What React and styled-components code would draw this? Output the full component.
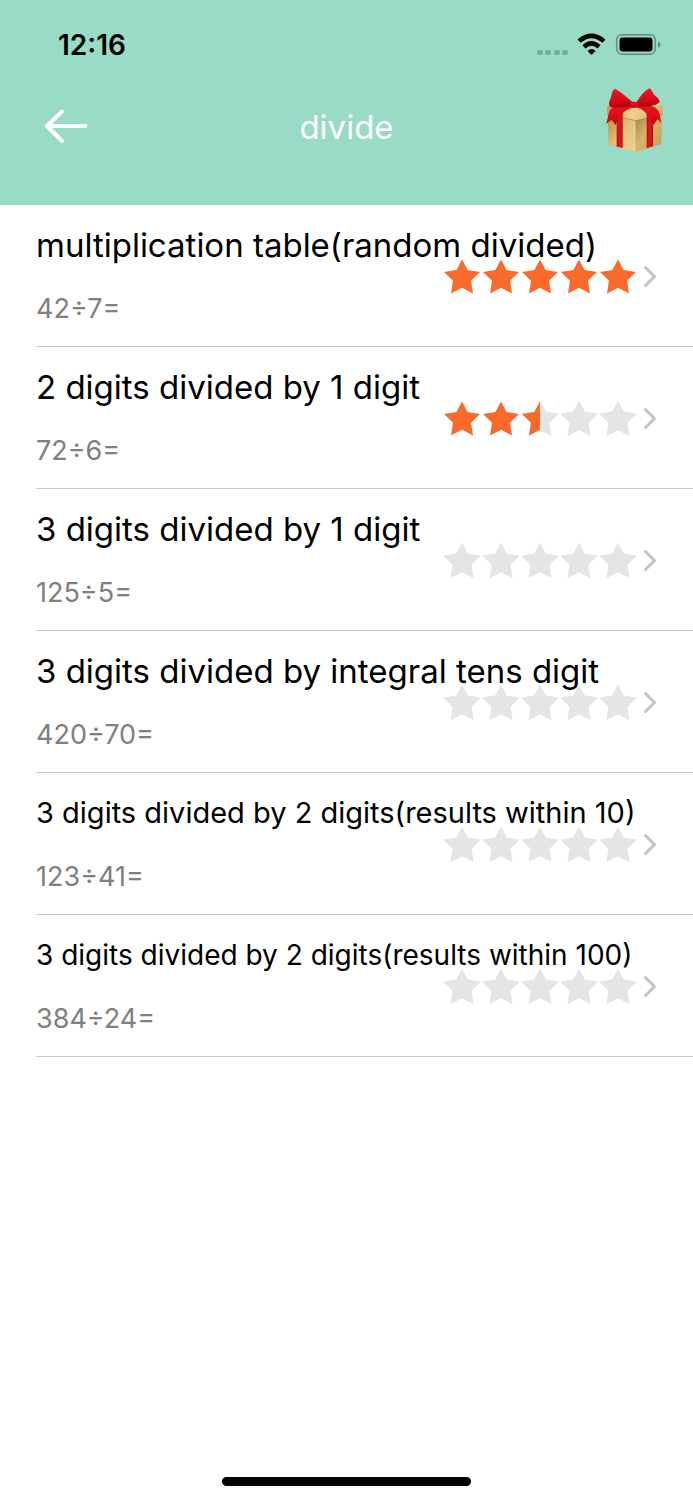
import React from 'react';
import styled, { createGlobalStyle } from 'styled-components';

const GlobalStyle = createGlobalStyle`
    * {
        box-sizing: border-box;
    }

    body {
        margin: 0;
        background: #fff;
        color: #000;
        font-family: Inter, 'Liberation Sans', sans-serif;
    }
`;

const Screen = styled.div`
    display: flex;
    flex-direction: column;
    min-height: 100vh;
`;

const Header = styled.header`
    display: flex;
    flex-direction: column;
    height: 205px;
    background: #99dbc6;
`;

const StatusBar = styled.div`
    display: flex;
    align-items: center;
    justify-content: space-between;
    height: 88px;
    padding: 2px 32px 0 58px;
`;

const Time = styled.time`
    font-size: 28px;
    font-weight: 600;
    line-height: 32px;
`;

const StatusIcons = styled.svg`
    display: block;
    width: 124px;
    height: 24px;
`;

const NavBar = styled.nav`
    display: grid;
    grid-template-columns: 1fr auto 1fr;
    align-items: center;
    height: 76px;
    padding: 0 28px 0 42px;
`;

const IconButton = styled.button`
    display: block;
    align-self: ${(props) => props.$valign || 'center'};
    justify-self: ${(props) => props.$align};
    padding: 0;
    border: 0;
    background: none;
    cursor: pointer;

    svg {
        display: block;
    }
`;

const Heading = styled.h1`
    margin: 0;
    padding: 2px 14px 0 0;
    color: #fff;
    font-size: 33px;
    font-weight: 400;
    line-height: 40px;
`;

const LevelList = styled.ul`
    flex: 1;
    margin: 0;
    padding: 0 0 0 36px;
    list-style: none;
`;

const LevelItem = styled.li`
    height: 142px;
    border-bottom: 1px solid #c8c8c9;
`;

const LevelLink = styled.a`
    display: grid;
    align-items: center;
    height: 100%;
    padding: 2px 36px 0 0;
    color: inherit;
    text-decoration: none;
`;

/* text and rating share one cell, so long titles run above the stars */
const LevelText = styled.div`
    display: flex;
    grid-area: 1 / 1;
    flex-direction: column;
    gap: 24px;
`;

const titleSizes = {
    regular: '33px',
    compact: '29px',
    small: '28px',
};

const LevelTitle = styled.span`
    font-size: ${(props) => titleSizes[props.$size]};
    line-height: 40px;
    white-space: nowrap;
`;

const Sample = styled.span`
    color: #808080;
    font-size: 27px;
    line-height: 40px;
`;

const Rating = styled.div`
    display: flex;
    grid-area: 1 / 1;
    align-items: center;
    justify-self: end;
    gap: 7px;

    svg {
        display: block;
    }
`;

const HomeArea = styled.footer`
    display: flex;
    justify-content: center;
    padding-bottom: 14px;
`;

const HomeIndicator = styled.div`
    width: 36%;
    height: 9px;
    border-radius: 5px;
    background: #000;
`;

const STAR_PATH =
    'M18 0.4 L23.6 11 L36 13 L27 21.8 L29 34.4 L18 28.8 L7 34.4 L9 21.8 L0 13 L12.4 11 Z';

const levels = [
    { title: 'multiplication table(random divided)', sample: '42÷7=', stars: 5 },
    { title: '2 digits divided by 1 digit', sample: '72÷6=', stars: 2.5 },
    { title: '3 digits divided by 1 digit', sample: '125÷5=', stars: 0 },
    {
        title: '3 digits divided by integral tens digit',
        sample: '420÷70=',
        stars: 0,
    },
    {
        title: '3 digits divided by 2 digits(results within 10)',
        sample: '123÷41=',
        stars: 0,
        size: 'compact',
    },
    {
        title: '3 digits divided by 2 digits(results within 100)',
        sample: '384÷24=',
        stars: 0,
        size: 'small',
    },
];

const Stars = ({ value }) => (
    <svg
        width="192"
        height="36"
        viewBox="0 0 192 36"
        role="img"
        aria-label={`${value} of 5 stars`}
    >
        <defs>
            <clipPath id={`filled-${value}`}>
                <rect width={Math.ceil(value) * 39 - (value % 1) * 42} height="36" />
            </clipPath>
        </defs>
        <g fill="#e5e5e5" stroke="#e5e5e5" strokeLinejoin="round">
            {[0, 1, 2, 3, 4]
                .filter((i) => i + 1 > value)
                .map((i) => (
                    <path key={i} d={STAR_PATH} transform={`translate(${i * 39})`} />
                ))}
        </g>
        <g fill="#fa6a2a" clipPath={`url(#filled-${value})`}>
            {[0, 1, 2, 3, 4]
                .filter((i) => i < value)
                .map((i) => (
                    <path key={i} d={STAR_PATH} transform={`translate(${i * 39})`} />
                ))}
        </g>
    </svg>
);

const Chevron = () => (
    <svg width="14" height="24" viewBox="0 0 14 24" aria-hidden="true">
        <path
            d="M2.5 2.5 L11.5 11.5 L2.5 20.5"
            fill="none"
            stroke="#c4c4c7"
            strokeWidth="3"
            strokeLinecap="round"
            strokeLinejoin="round"
        />
    </svg>
);

const BackIcon = () => (
    <svg width="46" height="38" viewBox="0 0 46 38" aria-hidden="true">
        <path
            d="M20 4.5 L5 19 L20 34 M5 19 H43.5"
            fill="none"
            stroke="#fff"
            strokeWidth="4"
            strokeLinecap="round"
            strokeLinejoin="round"
        />
    </svg>
);

const GiftIcon = () => (
    <svg width="60" height="66" viewBox="45 36 180 198" aria-hidden="true">
        <defs>
            <linearGradient id="box-left" x1="0" y1="0" x2="1" y2="1">
                <stop offset="0" stopColor="#b98b42" />
                <stop offset="0.5" stopColor="#e2c077" />
                <stop offset="1" stopColor="#efd491" />
            </linearGradient>
            <linearGradient id="box-right" x1="0" y1="0" x2="1" y2="1">
                <stop offset="0" stopColor="#a87d3c" />
                <stop offset="0.45" stopColor="#d9b569" />
                <stop offset="1" stopColor="#c39b52" />
            </linearGradient>
            <linearGradient id="lid" x1="0" y1="0" x2="1" y2="0">
                <stop offset="0" stopColor="#c79c51" />
                <stop offset="0.45" stopColor="#efd28c" />
                <stop offset="1" stopColor="#d4af66" />
            </linearGradient>
            <linearGradient id="bow" x1="0" y1="0" x2="0" y2="1">
                <stop offset="0" stopColor="#ea1822" />
                <stop offset="0.6" stopColor="#d90c18" />
                <stop offset="1" stopColor="#b4060f" />
            </linearGradient>
            <linearGradient id="ribbon" x1="0" y1="0" x2="1" y2="0">
                <stop offset="0" stopColor="#c00a14" />
                <stop offset="0.5" stopColor="#e01822" />
                <stop offset="1" stopColor="#bd0a14" />
            </linearGradient>
        </defs>
        <path d="M54 112 L137 132 V228 L55 207 Z" fill="url(#box-left)" />
        <path d="M137 132 L216 112 L214 204 L137 228 Z" fill="url(#box-right)" />
        <path d="M51 89 L137 78 L219 89 L139 104 Z" fill="#e6c67c" />
        <path d="M51 89 L139 101 L219 89 V114 L139 134 L51 115 Z" fill="url(#lid)" />
        <path d="M52 116 L139 134 L218 115" fill="none" stroke="#a27a3b" strokeWidth="2" />
        <path d="M80 98 L98 98 V216 L80 212 Z" fill="url(#ribbon)" />
        <path d="M170 98 L189 98 V211 L170 217 Z" fill="url(#ribbon)" />
        <path
            d="M128 82 C99 84 68 88 59 104 C54 118 52 132 49 144 L64 131 L77 147 C84 128 95 104 130 94 Z"
            fill="url(#bow)"
        />
        <path
            d="M141 82 C169 83 196 89 206 106 C211 119 211 130 213 142 L203 129 L190 147 C180 125 169 103 139 94 Z"
            fill="url(#bow)"
        />
        <path
            d="M128 78 C111 64 92 47 75 38 C66 42 65 57 62 68 C57 75 55 82 59 92 C78 97 104 96 128 90 Z"
            fill="url(#bow)"
        />
        <path
            d="M140 78 C150 60 163 46 178 37 C188 42 187 55 199 62 C207 67 209 74 208 80 C188 90 163 95 141 90 Z"
            fill="url(#bow)"
        />
        <path
            d="M121 83 C101 79 84 69 74 58 M121 87 C101 85 79 88 66 93 M146 82 C158 75 170 65 180 55 M146 88 C164 90 185 86 200 84"
            fill="none"
            stroke="#a30914"
            strokeWidth="2"
        />
        <rect x="121" y="77" width="25" height="18" rx="8" fill="#db101c" />
        <path d="M124 91 Q133 97 143 91" fill="none" stroke="#a30914" strokeWidth="2" />
    </svg>
);

const PhoneStatus = () => (
    <StatusIcons viewBox="0 0 124 24" role="img" aria-label="Wi-Fi on, battery full">
        <g fill="#76aa9a">
            {[0, 8, 17, 25].map((x) => (
                <rect key={x} x={x} y="17" width="6" height="5" rx="2" />
            ))}
        </g>
        <g fill="none" stroke="#000" strokeWidth="4.4">
            <path d="M42 8.2 Q54.5 -2.5 67 8.2" />
            <path d="M47 13.8 Q54.5 7 62 13.8" />
        </g>
        <path d="M50.5 18 Q54.5 14 58.5 18 L54.5 22 Z" fill="#000" />
        <rect
            x="79.7"
            y="1.7"
            width="38.6"
            height="19.6"
            rx="5"
            fill="none"
            stroke="#618c7e"
            strokeWidth="1.5"
        />
        <rect x="82.5" y="4.5" width="33" height="14" rx="3" fill="#000" />
        <path d="M121 8.5 Q123.5 9 123.5 11.5 Q123.5 14 121 14.5 Z" fill="#618c7e" />
    </StatusIcons>
);

const App = () => (
    <Screen>
        <GlobalStyle />
        <Header>
            <StatusBar>
                <Time>12:16</Time>
                <PhoneStatus />
            </StatusBar>
            <NavBar>
                <IconButton type="button" aria-label="Back" $align="start">
                    <BackIcon />
                </IconButton>
                <Heading>divide</Heading>
                <IconButton
                    type="button"
                    aria-label="Gift"
                    $align="end"
                    $valign="start"
                >
                    <GiftIcon />
                </IconButton>
            </NavBar>
        </Header>
        <LevelList>
            {levels.map(({ title, sample, stars, size = 'regular' }) => (
                <LevelItem key={title}>
                    <LevelLink href="#">
                        <LevelText>
                            <LevelTitle $size={size}>{title}</LevelTitle>
                            <Sample>{sample}</Sample>
                        </LevelText>
                        <Rating>
                            <Stars value={stars} />
                            <Chevron />
                        </Rating>
                    </LevelLink>
                </LevelItem>
            ))}
        </LevelList>
        <HomeArea>
            <HomeIndicator />
        </HomeArea>
    </Screen>
);

export default App;
